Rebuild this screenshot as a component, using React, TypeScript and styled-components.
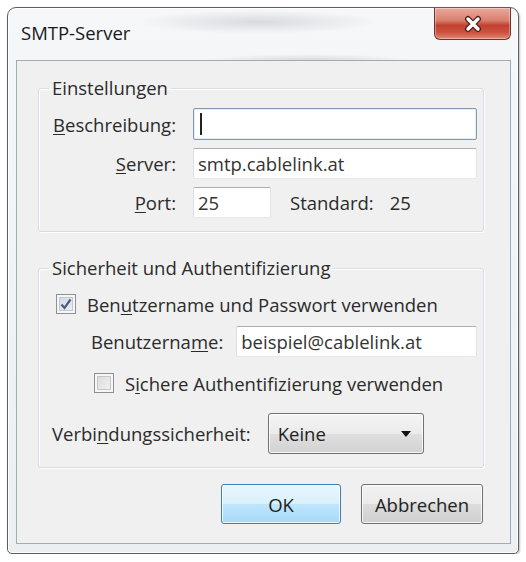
import React from 'react'
import styled, { createGlobalStyle, css } from 'styled-components'

const GlobalStyle = createGlobalStyle`
  body {
    margin: 0;
    background: #ffffff;
    font-family: "Segoe UI", "Open Sans", "Noto Sans", sans-serif;
    font-size: 18.5px;
    color: #2b2b2b;
  }
`;

const Window = styled.div`
  box-sizing: border-box;
  margin: 7px 0 0 7px;
  width: 512px;
  height: 547px;
  display: flex;
  flex-direction: column;
  padding: 0 7px 9px 8px;
  border: 1px solid #5b5e62;
  border-radius: 9px 9px 5px 5px;
  background:
    radial-gradient(ellipse 120px 12px at 250px 14px, rgba(150, 155, 160, 0.3), transparent),
    radial-gradient(ellipse 110px 8px at 300px 54px, rgba(140, 145, 150, 0.35), transparent),
    linear-gradient(180deg, #f5f7f9 0%, #eceff2 100%);
  box-shadow: inset 0 0 0 1px #ffffff, 1px 1px 2px rgba(0, 0, 0, 0.25);
`;

const TitleBar = styled.div`
  height: 52px;
  display: flex;
  justify-content: space-between;
  align-items: flex-start;
`;

const Title = styled.div`
  margin: 13px 0 0 5px;
  line-height: 24px;
  color: #1a1a1a;
`;

const CloseButton = styled.div`
  box-sizing: border-box;
  width: 77px;
  height: 32px;
  display: flex;
  align-items: center;
  justify-content: center;
  border: 1px solid #6e3028;
  border-top: none;
  border-radius: 0 0 6px 6px;
  background: linear-gradient(180deg, #eaa99c 0%, #d9806f 40%, #c2402f 56%, #cc5441 80%, #df8a74 100%);
  box-shadow: inset 0 0 0 1px rgba(255, 255, 255, 0.35);
`;

const Client = styled.div`
  flex: 1;
  display: flex;
  flex-direction: column;
  padding: 15px 26px 0 21px;
  border: 1px solid #a3abb3;
  background: #f0f0f0;
`;

const Group = styled.fieldset`
  margin: 0;
  padding: 0 6px 13px 13px;
  border: 1px solid #d5dfe5;
  border-radius: 3px;
  box-shadow: inset 1px 1px 0 #ffffff, 1px 1px 0 #ffffff;

  & + & {
    margin-top: 24px;
  }
`;

const Legend = styled.legend`
  padding: 0 3px;
  margin-left: -3px;
  line-height: 24px;
  color: #2b2b2b;
`;

const FieldGrid = styled.div`
  display: grid;
  grid-template-columns: 124px 1fr;
  grid-template-rows: 32px 31px 31px;
  column-gap: 17px;
  row-gap: 8px;
  margin-top: 8px;
  align-items: center;
`;

const FieldLabel = styled.div`
  text-align: right;
  white-space: nowrap;
`;

const Key = styled.span`
  text-decoration: underline;
  text-decoration-thickness: 1px;
  text-underline-offset: 2px;
`;

const TextBox = styled.div<{ $focused?: boolean; $width?: number }>`
  box-sizing: border-box;
  height: 100%;
  width: ${p => (p.$width ? `${p.$width}px` : 'auto')};
  flex: ${p => (p.$width ? 'none' : '1')};
  display: flex;
  align-items: center;
  padding: 0 4px;
  background: #ffffff;
  color: #333333;
  white-space: nowrap;
  border: 1px solid;
  border-color: #abadb3 #e2e3ea #e3e9ef #dbdfe6;
  border-radius: 2px;

  ${p =>
    p.$focused &&
    css`
      border-color: #8199b2;
      box-shadow: inset 0 0 0 1px #e6edf4;
    `}
`;

const Caret = styled.span`
  width: 2px;
  height: 22px;
  margin-left: 2px;
  background: #222222;
`;

const PortCell = styled.div`
  display: flex;
  align-items: center;
  height: 100%;
`;

const InfoText = styled.span<{ $left: number }>`
  margin-left: ${p => p.$left}px;
`;

const CheckRow = styled.div<{ $indent: number; $top: number }>`
  display: flex;
  align-items: center;
  gap: 11px;
  height: 26px;
  margin-top: ${p => p.$top}px;
  padding-left: ${p => p.$indent}px;
`;

const CheckBox = styled.span<{ $checked?: boolean }>`
  box-sizing: border-box;
  width: 20px;
  height: 20px;
  display: flex;
  align-items: center;
  justify-content: center;
  border: 1px solid #8e8f8f;
  background: ${p =>
    p.$checked
      ? 'linear-gradient(135deg, #cfd7e4 0%, #eef1f6 100%)'
      : 'linear-gradient(135deg, #d6d6d6 0%, #f7f7f7 100%)'};
  box-shadow: inset 0 0 0 2px #f6f6f6, inset 0 0 0 3px #c4c8cd;
`;

const FieldRow = styled.div<{ $indent: number; $top: number; $height: number }>`
  display: flex;
  align-items: center;
  height: ${p => p.$height}px;
  margin-top: ${p => p.$top}px;
  padding-left: ${p => p.$indent}px;
`;

const RowLabel = styled.span<{ $gap: number }>`
  margin-right: ${p => p.$gap}px;
  white-space: nowrap;
`;

const Dropdown = styled.div`
  box-sizing: border-box;
  width: 156px;
  height: 100%;
  display: flex;
  align-items: center;
  justify-content: space-between;
  padding: 0 12px 0 9px;
  border: 1px solid #707070;
  border-radius: 3px;
  background: linear-gradient(180deg, #f4f4f4 0%, #ebebeb 50%, #dfdfdf 51%, #d2d2d2 100%);
  box-shadow: inset 0 0 0 1px rgba(255, 255, 255, 0.8);
  color: #222222;
`;

const ButtonRow = styled.div`
  display: flex;
  justify-content: flex-end;
  gap: 20px;
  margin-top: 16px;
  padding-right: 1px;
`;

const Button = styled.div<{ $default?: boolean; $width: number }>`
  box-sizing: border-box;
  width: ${p => p.$width}px;
  height: 40px;
  display: flex;
  align-items: center;
  justify-content: center;
  border: 1px solid #707070;
  border-radius: 3px;
  color: #222222;
  background: linear-gradient(180deg, #f2f2f2 0%, #ebebeb 50%, #dddddd 51%, #cfcfcf 100%);
  box-shadow: inset 0 0 0 1px rgba(255, 255, 255, 0.8);

  ${p =>
    p.$default &&
    css`
      border-color: #3c7fb1;
      background: linear-gradient(180deg, #eaf6fd 0%, #d9f0fc 50%, #bee6fd 51%, #a7d9f5 100%);
    `}
`;

function CloseGlyph() {
  return (
    <svg width="22" height="18" viewBox="0 0 22 18">
      <path d="M6 4 L16 14 M16 4 L6 14" stroke="#4a1d17" strokeWidth="6" strokeLinecap="round" />
      <path d="M6 4 L16 14 M16 4 L6 14" stroke="#ffffff" strokeWidth="3.4" strokeLinecap="round" />
    </svg>
  )
}

function CheckMark() {
  return (
    <svg width="14" height="14" viewBox="0 0 14 14">
      <path d="M2.5 7.5 L5.5 11 L11.5 2.5" fill="none" stroke="#4b5d7a" strokeWidth="2.2" />
    </svg>
  )
}

function Arrow() {
  return (
    <svg width="10" height="6" viewBox="0 0 10 6">
      <path d="M0 0 H10 L5 6 Z" fill="#111111" />
    </svg>
  )
}

export default function App() {
  return (
    <>
      <GlobalStyle />
      <Window>
        <TitleBar>
          <Title>SMTP-Server</Title>
          <CloseButton>
            <CloseGlyph />
          </CloseButton>
        </TitleBar>
        <Client>
          <Group>
            <Legend>Einstellungen</Legend>
            <FieldGrid>
              <FieldLabel><Key>B</Key>eschreibung:</FieldLabel>
              <TextBox $focused><Caret /></TextBox>
              <FieldLabel><Key>S</Key>erver:</FieldLabel>
              <TextBox>smtp.cablelink.at</TextBox>
              <FieldLabel><Key>P</Key>ort:</FieldLabel>
              <PortCell>
                <TextBox $width={78}>25</TextBox>
                <InfoText $left={19}>Standard:</InfoText>
                <InfoText $left={16}>25</InfoText>
              </PortCell>
            </FieldGrid>
          </Group>
          <Group>
            <Legend>Sicherheit und Authentifizierung</Legend>
            <CheckRow $indent={4} $top={11}>
              <CheckBox $checked><CheckMark /></CheckBox>
              <span>Ben<Key>u</Key>tzername und Passwort verwenden</span>
            </CheckRow>
            <FieldRow $indent={39} $top={9} $height={31}>
              <RowLabel $gap={13}>Benutzerna<Key>m</Key>e:</RowLabel>
              <TextBox>beispiel@cablelink.at</TextBox>
            </FieldRow>
            <CheckRow $indent={42} $top={13}>
              <CheckBox />
              <span>S<Key>i</Key>chere Authentifizierung verwenden</span>
            </CheckRow>
            <FieldRow $indent={0} $top={17} $height={41}>
              <RowLabel $gap={17}>Verbi<Key>n</Key>dungssicherheit:</RowLabel>
              <Dropdown>
                <span>Keine</span>
                <Arrow />
              </Dropdown>
            </FieldRow>
          </Group>
          <ButtonRow>
            <Button $default $width={120}>OK</Button>
            <Button $width={122}>Abbrechen</Button>
          </ButtonRow>
        </Client>
      </Window>
    </>
  )
}
